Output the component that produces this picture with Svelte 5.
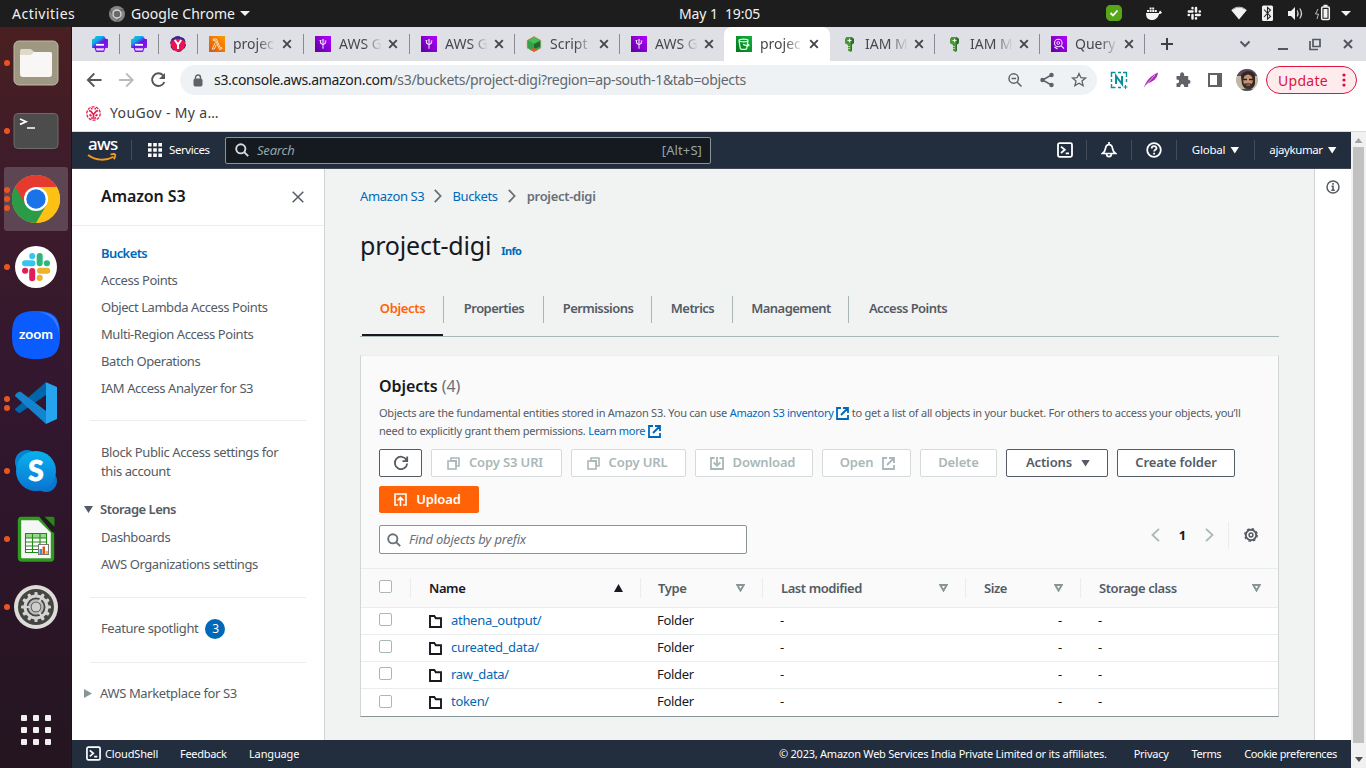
<script>
  const tabs = [
    { icon: 'lambda', label: 'projec', w: 106 },
    { icon: 'glue', label: 'AWS G', w: 106 },
    { icon: 'glue', label: 'AWS G', w: 105 },
    { icon: 'script', label: 'Script', w: 105 },
    { icon: 'glue', label: 'AWS G', w: 104 },
    { icon: 'bucket', label: 'projec', w: 106, active: true },
    { icon: 'key', label: 'IAM M', w: 105 },
    { icon: 'key', label: 'IAM M', w: 105 },
    { icon: 'query', label: 'Query', w: 105 }
  ];
  const dock = [
    { id: 'files', dots: 1 },
    { id: 'terminal', dots: 1 },
    { id: 'chrome', dots: 3, active: true },
    { id: 'slack', dots: 1 },
    { id: 'zoom', dots: 0 },
    { id: 'code', dots: 2 },
    { id: 'skype', dots: 1 },
    { id: 'calc', dots: 1 },
    { id: 'settings', dots: 1 }
  ];
  const navTop = ['Buckets', 'Access Points', 'Object Lambda Access Points', 'Multi-Region Access Points', 'Batch Operations', 'IAM Access Analyzer for S3'];
  const pageTabs = [
    { label: 'Objects', w: 84 },
    { label: 'Properties', w: 100 },
    { label: 'Permissions', w: 108 },
    { label: 'Metrics', w: 81 },
    { label: 'Management', w: 116 },
    { label: 'Access Points', w: 118 }
  ];
  const columns = ['Name', 'Type', 'Last modified', 'Size', 'Storage class'];
  const rows = ['athena_output/', 'cureated_data/', 'raw_data/', 'token/'];
  const gearTeeth = Array.from({ length: 12 }, (_, i) => i * 30);
</script>

{#snippet external()}
  <svg class="ext" width="13" height="13" viewBox="0 0 13 13" fill="none" stroke="currentColor" stroke-width="1.8">
    <path d="M5 1H1v11h11V8M7 1h5v5M12 1 5 8" />
  </svg>
{/snippet}

{#snippet shell(size)}
  <svg width={size} height={size} viewBox="0 0 16 16" fill="none" stroke="#fff" stroke-width="1.8">
    <rect x="1" y="1.2" width="14" height="13.6" rx="1.5" />
    <path d="m4 4.6 3.8 3.2L4 11M8.7 11.3H12" />
  </svg>
{/snippet}

{#snippet copyIcon()}
  <svg width="13" height="13" viewBox="0 0 13 13" fill="none" stroke="currentColor" stroke-width="1.6">
    <path d="M4 4V1h8v8H9" /><rect x="1" y="4" width="8" height="8" /><path d="M4 3.9h5.2V9" />
  </svg>
{/snippet}

{#snippet magnifier()}
  <svg width="14" height="14" viewBox="0 0 14 14" fill="none" stroke="currentColor" stroke-width="1.9">
    <circle cx="5.8" cy="5.8" r="4.6" /><path d="m9.2 9.2 4 4" />
  </svg>
{/snippet}

{#snippet favicon(name)}
  <svg class="fav" width="16" height="16" viewBox="0 0 16 16" fill="none">
    {#if name === 'lambda'}
      <rect width="16" height="16" fill="url(#gOrange)" />
      <path d="M4.300 3h3l4 8.800 1.300-.5.5 1.200-2.500 1-4-8.800H4.300zM6.400 6.500 3.200 13h2l2.200-4.300" stroke="#ffe9cf" stroke-width=".9" />
    {:else if name === 'glue'}
      <rect width="16" height="16" fill="url(#gPurple)" />
      <path d="M5.500 5v2L8 8.800v4M8 3.800v2.400M10.500 5.500V7L8 8.800" stroke="#f3defd" stroke-width="1.100" />
      <path d="M4.600 4.500h1.800M9.600 5h1.800M6.800 7h2.400M7.200 3.800h1.600" stroke="#f3defd" stroke-width="1.100" />
    {:else if name === 'script'}
      <path d="m8 .5 6.800 3.800v7.800L8 15.800l-6.800-3.700V4.300z" fill="#3fa94c" stroke="#e8894e" stroke-dasharray="1 1" />
      <path d="m1.600 5 6.400 3 6.400-3v6.500L8 15.200l-6.400-3.600z" fill="#37a04a" /><path d="m8 8 6-2.800v5.300L8 13z" fill="#23663a" />
      <path d="M4 13.800 8 12l4 1.800-4 2z" fill="#e9582d" /><path d="m2.800 4.500 5.200-3 5.200 3L8 7.400z" fill="#45c257" />
    {:else if name === 'bucket'}
      <rect width="16" height="16" fill="url(#gGreen)" />
      <path d="M3 4.500c0-1.800 9-1.800 9 0S3 6.300 3 4.500l1.300 8.200c1.300 1 5 1 6.400 0L12 4.500M7 8.400c6 2.600 7.500 1.100 4.500-.6" stroke="#e9ffe8" stroke-width="1.200" />
    {:else if name === 'key'}
      <path d="M5.300 1h5.400L13 3v4l-2 1.500v6L9.500 16 7 14.500V9L4 7.300V3z" fill="#4b963b" />
      <path d="M10.500 1 13 3v4l-2 1.500v6L9.800 16z" fill="#2c6b2c" />
      <path d="M6.500 4.500h4M8.500 2.800v3.500" stroke="#edf7e6" stroke-width="1.100" />
      <path d="M7 10.500h2M7 12.500h2" stroke="#a6d694" />
    {:else}
      <rect width="16" height="16" fill="url(#gPurple)" />
      <circle cx="7.300" cy="7" r="3.800" stroke="#f3defd" stroke-width="1.100" /><circle cx="7.300" cy="7" r="1.400" stroke="#f3defd" />
      <path d="m10 9.600 3 3M3.500 11l3 2" stroke="#f3defd" stroke-width="1.300" />
    {/if}
  </svg>
{/snippet}

{#snippet printer()}
  <svg class="fav" width="16" height="16" viewBox="0 0 16 16">
    <path d="M4 0h8l2 3h1c.7 0 1 .5 1 1v7c0 .7-.5 1-1 1h-1.500L12 16H4l-1.500-4H1c-.5 0-1-.3-1-1V4c0-.6.400-1 1-1h1z" fill="url(#gPrint)" />
    <path d="M4 8.800h8" stroke="#fff" stroke-width="1.800" /><path d="M4.600 14.500h6.800l.8-2.300H3.800z" fill="#efdcff" />
  </svg>
{/snippet}

{#snippet dockIcon(id)}
  <svg width="48" height="48" viewBox="0 0 48 48" fill="none">
    {#if id === 'files'}
      <rect x="2" y="2" width="44" height="44" rx="5" fill="#9e9782" stroke="#c0b9a5" />
      <path d="M8 12c0-1.500 1-2 2-2h8c2 0 3 3 5 3h15c2 0 2 1 2 2v4H8z" fill="#ded9cb" />
      <path d="M8 16h11l3-3h16c1.500 0 2 1 2 2v20c0 2-1 3-3 3H11c-2 0-3-1-3-3z" fill="#f8f7f5" />
    {:else if id === 'terminal'}
      <rect x="2" y="6.500" width="44" height="35" rx="4" fill="#4c4c4c" stroke="#6b6b69" />
      <path d="m8 12 6 2.700-6 2.700M15 21h8" stroke="#fff" stroke-width="1.700" />
    {:else if id === 'chrome'}
      <circle cx="24" cy="24" r="24" fill="#fbbc05" />
      <path d="M24 24 3.200 12A24 24 0 0 1 44.800 12z" fill="#e53b2f" />
      <path d="M24 12H44.800A24 24 0 0 1 24 48L34.400 30z" fill="#fcc113" />
      <path d="M3.200 12A24 24 0 0 0 24 48L34.400 30 24 24z" fill="#2c9b48" />
      <path d="M3.200 12 13.600 30 24 12z" fill="#e53b2f" />
      <path d="M3.200 12 13.600 30 20 34 9 35z" fill="#2c9b48" />
      <circle cx="24" cy="24" r="12" fill="#fff" /><circle cx="24" cy="24" r="9.700" fill="#1a73e8" />
    {:else if id === 'slack'}
      <circle cx="24" cy="24" r="21" fill="#fff" />
      <g stroke-width="6" stroke-linecap="round">
        <path d="M13 20.200h7.500M20.200 13v.2" stroke="#36c5f0" /><path d="M27.700 13v7.300M34.800 20.200h.2" stroke="#2eb67d" />
        <path d="M28 27.700h7.200M27.700 34.800v.2" stroke="#ecb22e" /><path d="M20.200 28v7.200M13 27.700h.2" stroke="#e01e5a" />
      </g>
    {:else if id === 'zoom'}
      <path d="M24 0c18 0 24 6 24 24s-6 24-24 24S0 42 0 24 6 0 24 0z" fill="#0b5cff" />
      <path d="M27 1c15 1 20 7 20 21C44 9 39 4 27 1z" fill="#3a7aff" />
      <text x="24" y="28" text-anchor="middle" textLength="34" lengthAdjust="spacingAndGlyphs" font-family="Lato" font-size="14" font-weight="700" fill="#fff">zoom</text>
    {:else if id === 'code'}
      <path d="M3 30 34 3v13L8 34c-1 .5-5-2.500-5-4z" fill="#0065a9" />
      <path d="M34 3.200 45 8v32l-11 5z" fill="#27a4ee" />
      <path d="M3 17 34 45V32L9 13c-2-1-6 2-6 4z" fill="#1683cf" />
    {:else if id === 'skype'}
      <circle cx="15" cy="15" r="12" fill="#0883d4" /><circle cx="34" cy="34" r="11" fill="#0a74cf" />
      <circle cx="24" cy="24" r="20" fill="url(#gSkype)" />
      <text x="24" y="34" text-anchor="middle" font-family="Lato" font-size="28" font-weight="900" fill="#fff" stroke="#fff" stroke-width=".8">S</text>
    {:else if id === 'calc'}
      <path d="M9 3.500h18L40.500 17v26c0 1.500-1 2-2 2H10c-2 0-2.500-1-2.500-2.500V5.500c0-1 .5-2 1.500-2z" fill="#f6f6f6" stroke="#2e9a20" stroke-width="3.400" />
      <path d="M27 1.500h5L42.500 12v6L40 17z" fill="#241a22" />
      <path d="M32.500 1.800h8c1.300 0 2 .7 2 2v8z" fill="#2c851b" />
      <path d="M13 18h22v20H13z" fill="#fff" /><path d="M13 18h22v5H13z" fill="#98d88a" />
      <path d="M13.500 18.500h21v19h-21zM13 23h22M13 27h22M13 31h22M13 34.500h22M20.500 18v20M28 18v20" stroke="#218a18" stroke-width="1.100" />
      <rect x="26.500" y="29.500" width="10" height="10" fill="#fff" stroke="#777" />
      <path d="M27.500 34h2.500v5h-2.500z" fill="#2a96e8" /><path d="M30.500 31.500h2.500V39h-2.500z" fill="#e0521b" /><path d="M33.500 36h2.500v3h-2.500z" fill="#f4b71c" />
    {:else}
      <circle cx="24" cy="24" r="22" fill="#dedcd9" /><circle cx="24" cy="24" r="18" fill="#454644" />
      {#each gearTeeth as a}
        <rect x="22.400" y="9" width="3.200" height="5" rx="1" fill="#d5d4d2" transform="rotate({a} 24 24)" />
      {/each}
      <circle cx="24" cy="24" r="11" stroke="#d5d4d2" stroke-width="3" />
      <circle cx="24" cy="24" r="6.500" stroke="#b9b9b7" stroke-width="2.500" /><circle cx="24" cy="24" r="4.500" fill="#cfcfcd" />
      <path d="M14 24h4M29.500 15 27 19M29.500 33 27 29" stroke="#d5d4d2" stroke-width="2.200" />
    {/if}
  </svg>
{/snippet}

<svg class="defs" width="0" height="0" aria-hidden="true">
  <defs>
    <linearGradient id="gOrange" x2="1" y1="1" y2="0"><stop stop-color="#d9560f" /><stop offset="1" stop-color="#ff9900" /></linearGradient>
    <linearGradient id="gPurple" x2="1" y1="1" y2="0"><stop stop-color="#5d00a0" /><stop offset="1" stop-color="#b400ff" /></linearGradient>
    <linearGradient id="gGreen" x2="1" y1="1" y2="0"><stop stop-color="#04761e" /><stop offset="1" stop-color="#0fb33c" /></linearGradient>
    <linearGradient id="gPrint" x2=".7" y2="1"><stop stop-color="#02d8e0" /><stop offset=".35" stop-color="#15a5ea" /><stop offset=".55" stop-color="#6a15e6" /><stop offset="1" stop-color="#9213e8" /></linearGradient>
    <linearGradient id="gSkype" x2="0" y2="1"><stop stop-color="#09b2ee" /><stop offset="1" stop-color="#0a74d1" /></linearGradient>
  </defs>
</svg>

<div class="desktop">
  <header class="topbar">
    <span class="activities">Activities</span>
    <svg width="16" height="16" viewBox="0 0 16 16" fill="none"><circle cx="8" cy="8" r="8" fill="#858585" /><path d="M8 4h7M4.600 10 1.300 4M11.500 10 8 16" stroke="#555" /><circle cx="8" cy="8" r="4" fill="#686868" stroke="#ddd" stroke-width="1.300" /></svg>
    <span class="app-name">Google Chrome</span>
    <i class="tri menu"></i>
    <span class="clock">May 1&nbsp; 19:05</span>
    <div class="tray">
      <svg width="260" height="27" viewBox="1100 0 260 27" fill="none">
        <path d="M1110 5h7c3 0 5 2 5 5v6c0 3-2 5-5 5h-6c-3 0-5-2-5-5v-7c0-2 2-4 4-4z" fill="#57a617" /><path d="m1110.500 13 2.500 2.500 4.500-5" stroke="#fff" stroke-width="1.800" />
        <path d="M1146 13h13c0-2 1-2 1.500-2.500.5 1 .5 1.500 1.500 1.500-.5 2-2 2-3 2-1 4-4 6-7 6-4 0-6-2-6-7zM1147 10h2v2h-2zM1149.600 10h2v2h-2zM1152.200 10h2v2h-2zM1154.800 10h2v2h-2zM1149.600 7.500h2v2h-2zM1152.200 7.500h2v2h-2z" fill="#f2f2f2" />
        <path d="M1188.800 11.500h3.700M1192.500 8v.3M1196 8v3.500M1199.700 11.500h.2M1196 15h3.700M1196 18.300v.3M1192.500 15v3.500M1188.700 15h.2" stroke="#f2f2f2" stroke-width="2.500" stroke-linecap="round" />
        <path d="M1231.500 10.500c4.500-4 10.500-4 15 0l-7.500 9z" fill="#f2f2f2" /><path d="M1231.500 10.200c4.500-4 10.500-4 15 0" stroke="#c2c2c2" />
        <rect x="1262" y="5.500" width="11" height="15.500" rx="1.500" fill="#f2f2f2" /><path d="m1264 9.500 6.500 7-3 2.500V7.500l3 2.500-6.500 7" stroke="#252525" stroke-width="1.100" />
        <path d="M1288 11h3l4-4v13l-4-4h-3z" fill="#f2f2f2" /><path d="M1297.300 10.500c1 2 1 4 0 6M1299.800 8.500c2 3 2 7 0 10" stroke="#cfcfcf" stroke-width="1.300" />
        <path d="m1318 9-2.500 5h3L1317 19" stroke="#bbb" /><rect x="1321.700" y="7" width="7.600" height="12.500" rx="1" stroke="#f2f2f2" stroke-width="1.500" /><path d="M1323.500 9h4v8.800h-4zM1323.500 4.700h4v2h-4z" fill="#f2f2f2" />
        <path d="M1341 11h10l-5 5z" fill="#f2f2f2" />
      </svg>
    </div>
  </header>

  <aside class="dock">
    {#each dock as d}
      <div class="slot">
        <div class="dots">{#each Array(d.dots) as _}<i></i>{/each}</div>
        <div class="tile" class:active={d.active}>{@render dockIcon(d.id)}</div>
      </div>
    {/each}
    <div class="apps">{#each Array(9) as _}<i></i>{/each}</div>
  </aside>

  <main class="browser">
    <div class="tabstrip">
      <div class="pin">{@render printer()}</div>
      <div class="pin">{@render printer()}</div>
      <div class="pin">
        <svg class="fav" width="16" height="16" viewBox="0 0 16 16" fill="none"><circle cx="8" cy="8" r="7.500" fill="#ee1250" stroke="#382c91" stroke-dasharray="5 3" /><path d="M2 4c2-3 10-3 12 0" stroke="#352b8d" stroke-width="2" /><path d="m4.800 4 3.200 4.500L11.200 4M8 8.500V13" stroke="#fff" stroke-width="2" /></svg>
      </div>
      {#each tabs as t, i}
        <div class="tab" class:active={t.active} class:nosep={i === 4} style:width="{t.w}px">
          {@render favicon(t.icon)}
          <span class="tab-label">{t.label}</span>
          <svg width="10" height="10" viewBox="0 0 10 10" stroke="#43474c" stroke-width="1.900"><path d="m1.200 1.200 7.600 7.600M8.800 1.200 1.200 8.800" /></svg>
        </div>
      {/each}
      <svg class="newtab" width="12" height="12" viewBox="0 0 12 12" stroke="#3c4043" stroke-width="2"><path d="M6 0v12M0 6h12" /></svg>
      <div class="window">
        <svg width="120" height="16" viewBox="0 0 120 16" fill="none" stroke="#54585e" stroke-width="2">
          <path d="m1.500 5.500 4.500 4.500 4.500-4.500" /><path d="M39 13h10" /><path d="M74 3.500h7v7h-7zM71 5v8.500h8" stroke-width="1.700" /><path d="m105 4 8 8M113 4l-8 8" />
        </svg>
      </div>
    </div>

    <div class="toolbar">
      <svg width="90" height="20" viewBox="0 0 90 20" fill="none" stroke-width="1.800">
        <path d="M16.500 10H3M9.300 3.500 2.800 10l6.500 6.500" stroke="#53575c" /><path d="M34 10h13.500M41.200 3.500l6.500 6.500-6.500 6.500" stroke="#b8babd" />
        <path d="M78 5.300A6.300 6.300 0 1 0 79.300 12" stroke="#53575c" stroke-width="2" /><path d="M80 3v6h-6z" fill="#53575c" />
      </svg>
      <div class="omnibox">
        <svg width="10" height="13" viewBox="0 0 10 13" fill="none"><rect x="1" y="5" width="8" height="7" rx="1" fill="#5f6368" stroke="#5f6368" /><path d="M2.500 5.500V3.500a2.500 2.500 0 0 1 5 0v2" stroke="#5f6368" stroke-width="1.400" /></svg>
        <span class="url"><b>s3.console.aws.amazon.com</b>/s3/buckets/project-digi?region=ap-south-1&amp;tab=objects</span>
        <svg width="80" height="18" viewBox="0 0 80 18" fill="none" stroke="#5f6368" stroke-width="1.500">
          <circle cx="6.700" cy="7.500" r="4.700" /><path d="m10 11 4.500 4.500M4.500 7.500h4.600" />
          <g transform="translate(-1.500)"><path d="m46 4-9 5 9 5" /><g fill="#5f6368"><circle cx="46" cy="4" r="1.500" /><circle cx="37" cy="9" r="1.500" /><circle cx="46" cy="14" r="1.500" /></g></g>
          <path d="m72 2.500 1.900 4.200 4.600.4-3.500 3 1.100 4.500L72 12.200l-4.100 2.400 1.100-4.500-3.500-3 4.600-.4z" stroke-width="1.300" />
        </svg>
      </div>
      <div class="extensions">
        <svg width="150" height="24" viewBox="1108 68 150 24" fill="none">
          <path d="M1111.500 77v-4.500h4M1118 72.500h3M1123 72.500h3.500V77M1126.500 79v3M1111.500 79v3M1111.500 84v3.500h4M1118 87.500h3" stroke="#0b8f9c" stroke-width="1.400" /><path d="M1116 84v-8l6 8v-8" stroke="#0b8f9c" stroke-width="2" /><path d="M1125.500 85v4M1123.500 87h4" stroke="#0b8f9c" />
          <path d="M1144 87.500c2-7 7-12 14-15-.5 6-5 9-9 10.500-2 .5-3 2-5 4.500z" fill="#a92bb8" /><path d="m1145 86 10-11" stroke="#e3a1eb" />
          <path d="M1176.500 76h3.700c-1-5 4.600-5 4 0h4v3.700c3-.5 3 4.500 0 4V87h-4c0-4-4-4-4 0h-3.700v-3.800c3.500.5 3.500-4.200 0-3.700z" fill="#5f6368" />
          <rect x="1209" y="74" width="12" height="12" stroke="#5f6368" stroke-width="2" /><path d="M1217 74h4v12h-4z" fill="#5f6368" />
          <clipPath id="face"><circle cx="1247" cy="80" r="11" /></clipPath>
          <g clip-path="url(#face)"><path d="M1236 69h22v23h-22z" fill="#c2b7a4" /><path d="M1236 69h22v7h-22z" fill="#5b4860" /><path d="M1241 77c0-7 14-8 14 0v7c-2 7-11 7-13 0z" fill="#332722" /><ellipse cx="1248" cy="80.500" rx="4.800" ry="6" fill="#c79476" /><path d="M1243 79.500h4M1249 79.500h4" stroke="#2b2020" stroke-width="1.500" /><path d="M1243.500 84c2-1 7-1 9 0l-1 4h-6z" fill="#443028" /><path d="M1246.500 85h3.500" stroke="#c08868" /><path d="M1238 92c2-4 15-5 18 0z" fill="#47515c" /></g>
        </svg>
        <button class="update">Update<svg width="4" height="14" viewBox="0 0 4 14" fill="#e00a34"><circle cx="2" cy="2" r="1.600" /><circle cx="2" cy="7" r="1.600" /><circle cx="2" cy="12" r="1.600" /></svg></button>
      </div>
    </div>

    <div class="bookmarks">
      <svg width="15" height="15" viewBox="0 0 15 15" fill="none" stroke="#e3194d"><circle cx="7.500" cy="7.500" r="6.700" stroke-dasharray="3 1.200" stroke-width="1.300" /><path d="m3 4.500 2 1 2.500 3 2.500-3 2-1M7.500 8.500V11M3.500 8.500 5.500 10M11.500 8.500l-2 1.500M5 2.800h1.500M8.500 2.800H10M5 12h5" stroke-width="1.600" /></svg>
      <span>YouGov - My a…</span>
    </div>

    <div class="page">
      <div class="viewport">
        <header class="aws">
          <div class="logo"><span>aws</span>
            <svg width="30" height="9" viewBox="0 0 30 9" fill="none" stroke="#f19a20" stroke-width="1.800"><path d="M1 2c8 5.800 18 6.200 25.500 1.800M23.500 1.500c3-.8 4.500-.3 4.700.3.300 1-.5 3-1.400 4.500" /></svg>
          </div>
          <i class="vr"></i>
          <svg width="14" height="14" viewBox="0 0 14 14" fill="#fff"><path d="M0 0h3.600v3.600H0zM5.200 0h3.600v3.600H5.200zM10.400 0H14v3.600h-3.600zM0 5.200h3.600v3.600H0zM5.200 5.200h3.600v3.600H5.200zM10.400 5.200H14v3.600h-3.600zM0 10.400h3.600V14H0zM5.200 10.400h3.600V14H5.200zM10.400 10.400H14V14h-3.600z" /></svg>
          <span class="services">Services</span>
          <div class="aws-search">{@render magnifier()}<em>Search</em><span>[Alt+S]</span></div>
          <div class="aws-right">
            <span class="cell c1">{@render shell(16)}</span>
            <span class="cell c2"><svg width="16" height="16" viewBox="0 0 16 16" fill="none" stroke="#fff" stroke-width="1.700"><path d="M8 0v2.500M1.500 11.500h13c-2.500-2-2.700-3-3-5C11.200 4 10 2.700 8 2.700S4.800 4 4.500 6.500c-.3 2-.5 3-3 5zM5.500 11.500c0 4.200 5 4.200 5 0" /></svg></span>
            <span class="cell c2"><svg width="16" height="16" viewBox="0 0 16 16" fill="none" stroke="#fff" stroke-width="1.800"><circle cx="8" cy="8" r="6.800" /><path d="M5.700 6.500c0-3 4.800-3 4.800-.3 0 1.600-2.400 1.600-2.400 3.300M8.100 10.800v1.700" /></svg></span>
            <span class="cell c3"><span>Global</span><i class="tri light"></i></span>
            <span class="cell c4"><span>ajaykumar</span><i class="tri light"></i></span>
          </div>
        </header>

        <div class="console">
          <nav class="side">
            <div class="side-head"><strong>Amazon S3</strong>
              <svg width="12" height="12" viewBox="0 0 12 12" stroke="#545b64" stroke-width="1.500"><path d="m.7.700 10.600 10.600M11.300.7.700 11.300" /></svg>
            </div>
            <ul class="first">{#each navTop as n, i}<li class:current={i === 0}>{n}</li>{/each}</ul>
            <hr />
            <p class="block">Block Public Access settings for<br />this account</p>
            <div class="group"><i class="tri"></i><strong>Storage Lens</strong></div>
            <ul><li>Dashboards</li><li>AWS Organizations settings</li></ul>
            <hr class="h2" />
            <div class="spot"><span>Feature spotlight</span><b>3</b></div>
            <hr class="h3" />
            <div class="market"><i></i>AWS Marketplace for S3</div>
          </nav>

          <section class="content">
            <div class="crumbs">
              <a>Amazon S3</a><svg width="8" height="14" viewBox="0 0 8 14" fill="none" stroke="#687078" stroke-width="1.800"><path d="m.8.800 5.800 6.200L.8 13.200" /></svg>
              <a>Buckets</a><svg width="8" height="14" viewBox="0 0 8 14" fill="none" stroke="#687078" stroke-width="1.800"><path d="m.8.800 5.800 6.200L.8 13.200" /></svg>
              <b>project-digi</b>
            </div>
            <div class="heading"><h1>project-digi</h1><a>Info</a></div>
            <div class="ptabs">
              {#each pageTabs as t, i}<div class="ptab" class:on={i === 0} style:width="{t.w}px"><span>{t.label}</span></div>{/each}
            </div>

            <div class="panel">
              <div class="panel-top">
                <h2>Objects <span>(4)</span></h2>
                <p>Objects are the fundamental entities stored in Amazon S3. You can use <a>Amazon S3 inventory {@render external()}</a> to get a list of all objects in your bucket. For others to access your objects, you’ll<br />need to explicitly grant them permissions. <a>Learn more {@render external()}</a></p>
                <div class="actions">
                  <button class="b-refresh"><svg width="16" height="16" viewBox="0 0 16 16" fill="none" stroke="#545b64" stroke-width="1.800"><path d="M13.500 5A6.200 6.200 0 1 0 14.200 8.500M14.200 1.500v4.700H9.500" /></svg></button>
                  <button class="off b-uri">{@render copyIcon()}<span>Copy S3 URI</span></button>
                  <button class="off b-url">{@render copyIcon()}<span>Copy URL</span></button>
                  <button class="off b-down"><svg width="14" height="13" viewBox="0 0 14 13" fill="none" stroke="currentColor" stroke-width="1.800"><path d="M4.500 1H1v11h12V1H9.500M7 0v8.500M3.700 5.500 7 8.700l3.300-3.200" /></svg><span>Download</span></button>
                  <button class="off b-open"><span>Open</span>{@render external()}</button>
                  <button class="off b-del"><span>Delete</span></button>
                  <button class="b-act"><span>Actions</span><i class="tri"></i></button>
                  <button class="b-new"><span>Create folder</span></button>
                  <button class="b-up"><svg width="13" height="13" viewBox="0 0 13 13" fill="none" stroke="currentColor" stroke-width="1.600"><path d="M4 12H1V1h11v11H9M6.500 13V4.500M3.500 7.500l3-3 3 3" /></svg><span>Upload</span></button>
                </div>
                <div class="filter">
                  <div class="find">{@render magnifier()}<em>Find objects by prefix</em></div>
                  <div class="pager">
                    <svg width="9" height="14" viewBox="0 0 9 14" fill="none" stroke="#aab7b8" stroke-width="1.800"><path d="M8 .8 1.500 7 8 13.200" /></svg>
                    <b>1</b>
                    <svg width="9" height="14" viewBox="0 0 9 14" fill="none" stroke="#aab7b8" stroke-width="1.800"><path d="M1 .8 7.500 7 1 13.200" /></svg>
                    <i class="bar"></i>
                    <svg width="14" height="14" viewBox="0 0 14 14" fill="none" stroke="#545b64"><circle cx="7" cy="7" r="5.200" stroke-width="1.900" /><circle cx="7" cy="7" r="6.300" stroke-width="1.300" stroke-dasharray="2.480 2.480" /><circle cx="7" cy="7" r="1.900" stroke-width="1.500" /></svg>
                  </div>
                </div>
              </div>
              <div class="row head">
                <div class="check"><i></i></div>
                {#each columns as c, i}
                  <div class="col" class:sorted={i === 0} class:type={i === 1}><b>{c}</b>
                    {#if i === 0}<svg width="9" height="8" viewBox="0 0 9 8"><path d="M4.500 0 9 8H0z" fill="#16191f" /></svg>
                    {:else}<svg width="9" height="8" viewBox="0 0 9 8"><path d="M1.200 1h6.600L4.500 6.600z" fill="none" stroke="#879596" stroke-width="1.900" /></svg>{/if}
                  </div>
                {/each}
              </div>
              {#each rows as r}
                <div class="row">
                  <div class="check"><i></i></div>
                  <div class="name"><svg width="13" height="13" viewBox="0 0 13 13" fill="none" stroke="#16191f" stroke-width="1.900"><path d="M1 1h4.300l1.500 2.200H12V12H1z" /></svg><a>{r}</a></div>
                  <div class="kind">Folder</div><div>-</div><div class="size">-</div><div>-</div>
                </div>
              {/each}
            </div>
          </section>

          <aside class="info"><svg width="14" height="14" viewBox="0 0 14 14" fill="none" stroke="#545b64" stroke-width="1.500"><circle cx="7" cy="7" r="6" /><path d="M5.500 6.300H7V10M5.300 10.200h3.500M6.200 3.900h1.600" stroke-width="1.600" /></svg></aside>
        </div>

        <footer class="foot">
          {@render shell(15)}<span class="cs">CloudShell</span><span class="fb">Feedback</span><span>Language</span>
          <span class="copy">© 2023, Amazon Web Services India Private Limited or its affiliates.</span><span class="pr">Privacy</span><span class="te">Terms</span><span class="ck">Cookie preferences</span>
        </footer>
      </div>
      <div class="scroll"><i class="up"></i><div></div><i class="down"></i></div>
    </div>
  </main>
</div>

<style>
  :global(body) { margin: 0; overflow: hidden; }
  * { box-sizing: border-box; }
  .defs { position: absolute; }
  svg { display: block; flex: none; }
  ul, p, h1, h2 { margin: 0; padding: 0; list-style: none; }
  button { font: inherit; margin: 0; padding: 0; }
  .desktop { width: 1366px; height: 768px; display: grid; grid-template: 27px 741px / 72px 1294px; font-family: "Noto Sans", "Open Sans", sans-serif; font-size: 13px; white-space: nowrap; overflow: hidden; }

  .tri { display: block; width: 9px; height: 7px; clip-path: polygon(0 0, 100% 0, 50% 100%); background: #545b64; flex: none; }
  .tri.light { background: #fff; }
  .tri.menu { background: #f2f2f2; width: 10px; height: 5px; }

  .topbar { grid-column: 1 / 3; background: #1d1d1d; color: #f2f2f2; display: flex; align-items: center; padding-left: 12px; font-size: 14px; }
  .activities { width: 97px; letter-spacing: .5px; }
  .app-name { margin: 0 5px 0 6px; width: 104px; letter-spacing: .05px; }
  .clock { margin-left: 429px; width: 82px; letter-spacing: -.1px; padding-bottom: 1px; }
  .tray { margin-left: auto; padding-right: 6px; }

  .dock { background: linear-gradient(#491f21, #3f1c2a 18%, #32172f 50%, #2d1529 70%, #241520); padding-top: 4px; border-right: 1px solid #20101d; }
  .slot { height: 64px; margin-bottom: 4px; display: flex; align-items: center; }
  .dots { width: 7px; margin-left: 4px; margin-right: -7px; display: flex; flex-direction: column; gap: 3px; z-index: 1; }
  .dots i { height: 6px; width: 6px; border-radius: 50%; background: #e95420; }
  .tile { width: 64px; height: 64px; display: grid; place-items: center; border-radius: 3px; }
  .tile.active { background: #5e4553; }
  .apps { display: grid; grid-template-columns: repeat(3, 6px); gap: 6px; margin: 76px 0 0 21px; }
  .apps i { width: 6px; height: 6px; border-radius: 1px; background: #f1f0ee; }

  .browser { background: #fff; display: flex; flex-direction: column; }
  .tabstrip { height: 34px; background: #dee0e5; display: flex; align-items: center; padding-left: 9px; color: #45484d; }
  .pin { width: 39px; height: 20px; display: flex; align-items: center; justify-content: center; border-right: 1px solid #888b91; }
  .tab { height: 20px; padding-left: 11px; border-right: 1px solid #888b91; display: flex; align-items: center; font-size: 14px; }
  .tab-label { width: 43px; margin: 0 6px 0 8px; padding-bottom: 1px; -webkit-mask: linear-gradient(90deg, #000 25px, transparent 43px); mask: linear-gradient(90deg, #000 25px, transparent 43px); }
  .tab.nosep { border-color: transparent; }
  .tab.active { height: 34px; padding-left: 12px; background: #fff; border: 0; border-radius: 8px 8px 0 0; }
  .newtab { margin-left: 16px; }
  .window { margin-left: 66px; }

  .toolbar { height: 38px; display: flex; align-items: center; padding-left: 13px; }
  .omnibox { width: 917px; height: 30px; margin-left: 5px; border-radius: 15px; background: #eff2f4; display: flex; align-items: center; padding: 0 10px 0 13px; }
  .url { color: #63676c; font-size: 14px; letter-spacing: -.325px; margin-left: 11px; flex: 1; padding-bottom: 2px; }
  .url b { font-weight: 400; color: #202124; }
  .extensions { display: flex; align-items: center; margin-left: 11px; }
  .update { width: 91px; height: 28px; margin-left: 8px; border: 1px solid #dc143c; border-radius: 14px; background: #fdebee; color: #dc143c; font-size: 14px; letter-spacing: .3px; display: flex; align-items: center; justify-content: space-between; padding: 0 10px 0 11px; }
  .bookmarks { height: 32px; display: flex; align-items: center; gap: 9px; padding-left: 14px; color: #3c4043; font-size: 14px; letter-spacing: .35px; padding-bottom: 4px; }
  .bookmarks span { padding-bottom: 2px; }
  .page { flex: none; height: 637px; display: flex; border-top: 1px solid #d5dbdb; }
  .viewport { width: 1279px; display: flex; flex-direction: column; }

  .aws { height: 37px; background: #222d3e; border-bottom: 1px solid #414750; display: flex; align-items: center; color: #fff; font-size: 11.5px; letter-spacing: -.4px; padding-left: 15px; }
  .logo { width: 30px; height: 24px; letter-spacing: -.7px; }
  .logo span { display: block; height: 15px; font-size: 17px; line-height: 12px; padding-left: 1px; font-weight: 500; }
  .vr { width: 1px; height: 20px; background: #414d5c; margin: 0 16px 0 14px; }
  .services { width: 56px; padding: 0 0 1px 7px; }
  .aws-search { width: 486px; height: 27px; margin-left: 7px; border: 1px solid #879596; border-radius: 2px; background: #151920; color: #95a5a6; display: flex; align-items: center; padding: 0 8px 0 9px; font-size: 13px; letter-spacing: -.2px; }
  .aws-search svg { color: #d5dbdb; }
  .aws-search em { margin-left: 8px; flex: 1; }
  .aws-search span { letter-spacing: .1px; }
  .aws-right { margin-left: auto; display: flex; align-items: center; }
  .cell { height: 20px; display: flex; align-items: center; justify-content: center; }
  .cell span { padding-bottom: 1px; }
  .cell + .cell { border-left: 1px solid #414d5c; }
  .c1 { width: 43px; } .c2 { width: 45px; }
  .c3 { width: 78px; gap: 5px; letter-spacing: -.2px; } .c4 { width: 97px; gap: 5px; }

  .console { height: 571px; display: flex; background: #f1f3f3; color: #545b64; }
  .side { width: 253px; background: #fff; border-right: 1px solid #d0d4d4; letter-spacing: -.43px; }
  .side-head { height: 57px; border-bottom: 1px solid #eaeded; padding: 0 20px 1px 29px; display: flex; align-items: center; justify-content: space-between; }
  .side-head strong { font-size: 16px; color: #16191f; letter-spacing: -.1px; font-weight: 600; padding-bottom: 1px; }
  li { height: 27px; line-height: 27px; padding-left: 29px; }
  .first { padding-top: 14px; }
  .current { font-weight: 600; color: #0068b8; letter-spacing: -.6px; }
  hr { border: 0; border-top: 1px solid #eaeded; margin: 18px 18px 0; }
  .block { padding: 22px 0 0 29px; line-height: 19px; letter-spacing: -.4px; }
  .group { height: 27px; margin-top: 14px; display: flex; align-items: center; gap: 7px; padding-left: 12px; margin-bottom: 2px; }
  .group .tri { margin-top: 2px; }
  .group strong { font-weight: 600; letter-spacing: -.5px; }
  .h2 { margin-top: 19px; }
  .spot { height: 26px; margin-top: 18px; padding-left: 29px; display: flex; align-items: center; }
  .spot span { padding-bottom: 2px; letter-spacing: -.4px; }
  .spot b { width: 20px; height: 20px; border-radius: 50%; background: #0068b8; color: #fff; font-weight: 400; font-size: 12px; line-height: 19px; text-align: center; margin-left: 7px; }
  .h3 { margin-top: 20px; }
  .market { height: 26px; margin-top: 17px; display: flex; align-items: center; gap: 8px; padding-left: 12px; letter-spacing: -.37px; }
  .market i { width: 8px; height: 9px; background: #879596; clip-path: polygon(0 0, 100% 50%, 0 100%); margin-top: 1px; }

  a { color: #0068b8; }
  .content { width: 989px; padding: 18px 34px 0 35px; }
  .crumbs { height: 20px; display: flex; align-items: center; letter-spacing: -.37px; gap: 10px; margin-top: -1px; }
  .crumbs b { color: #687078; font-weight: 600; letter-spacing: -.3px; margin-left: 1px; }
  .heading { display: flex; align-items: baseline; height: 36px; margin-top: 22px; }
  h1 { font-size: 25px; line-height: 34px; font-weight: 400; color: #16191f; letter-spacing: -.2px; margin-right: 10px; }
  .heading a { font-weight: 700; font-size: 11px; letter-spacing: -.6px; }
  .ptabs { height: 59px; margin: 14px 1px 0 0; padding-top: 18px; border-bottom: 1px solid #aab7b8; display: flex; font-weight: 600; letter-spacing: -.55px; }
  .ptab { height: 27px; line-height: 25px; border-right: 1px solid #aab7b8; text-align: center; padding-left: 1px; }
  .ptab:last-child { border: 0; padding: 0; }
  .ptab.on { color: #ff6207; padding-left: 2px; height: 41px; border-right: 0; }
  .ptab.on span { display: block; height: 27px; border-right: 1px solid #aab7b8; letter-spacing: -.35px; }
  .ptab.on::after { content: ""; display: block; height: 2px; margin-top: 11px; background: #16191f; margin-right: 1px; }

  .panel { width: 919px; margin-top: 18px; border: 1px solid #d0d5d5; border-top-color: #eaeded; border-bottom-color: #879596; background: #fafafa; }
  .panel-top { height: 212px; padding: 17px 18px 0; }
  h2 { font-size: 16px; line-height: 26px; font-weight: 600; color: #16191f; letter-spacing: -.05px; }
  h2 span { font-weight: 400; color: #687078; }
  .panel p { font-size: 11px; line-height: 18px; letter-spacing: -.24px; padding-top: 5px; height: 50px; }
  .panel p a { letter-spacing: -.28px; }
  .panel p svg { display: inline-block; vertical-align: -3px; }
  .actions { display: flex; flex-wrap: wrap; gap: 9px; font-weight: 600; padding-right: 20px; }
  .actions button { height: 28px; display: flex; align-items: center; justify-content: center; gap: 9px; border: 1px solid #545b64; border-radius: 2px; background: #fff; color: #545b64; letter-spacing: -.13px; }
  .actions button span { padding-bottom: 2px; }
  .actions button.off { color: #aab7b8; border-color: #d5dbdb; }
  .b-refresh { width: 43px; } .b-uri { width: 131px; } .b-url { width: 115px; } .b-down { width: 118px; }
  .actions .b-uri, .actions .b-url, .actions .b-down, .actions .b-up { padding-right: 3px; }
  .b-open { width: 89px; } .b-del { width: 77px; } .b-act { width: 102px; } .b-new { width: 118px; }
  .actions .b-open, .actions .b-act { padding-left: 2px; }
  .actions .b-up { width: 100px; height: 27px; background: #ff6207; border-color: #ff6207; color: #fff; }
  .filter { display: flex; justify-content: space-between; margin-top: 12px; }
  .find { width: 368px; height: 29px; border: 1px solid #879596; border-radius: 2px; background: #fff; display: flex; align-items: center; padding-left: 7px; color: #687078; gap: 8px; letter-spacing: -.2px; }
  .find em { padding-bottom: 2px; }
  .pager { height: 20px; display: flex; align-items: center; color: #16191f; padding-right: 2px; }
  .pager b { width: 45px; text-align: center; padding-bottom: 1px; }
  .bar { width: 1px; height: 27px; background: #eaeded; margin: 0 15px 0 14px; }
  .row { height: 27px; display: grid; grid-template-columns: 50px 230px 122px 203px 115px 197px; align-items: center; background: #fff; color: #16191f; border-top: 1px solid #eaeded; letter-spacing: -.3px; }
  .row > div { padding: 0 0 2px 17px; }
  .row > .check { padding-left: 18px; padding-bottom: 3px; }
  .row > .size { text-align: right; padding-right: 19px; }
  .row > .kind { padding-left: 16px; }
  .head { height: 39px; background: #fafafa; color: #545b64; }
  .check i { display: block; width: 13px; height: 13px; border: 1px solid #aab7b8; border-radius: 2px; background: #fff; }
  .row > .col { height: 20px; display: flex; align-items: center; justify-content: space-between; padding: 0 18px 0 18px; border-left: 1px solid #eaeded; margin-left: -1px; }
  .row > .col:last-child { padding-right: 17px; }
  .row > .type { padding-left: 17px; }
  .col b { font-weight: 600; letter-spacing: -.42px; padding-bottom: 1px; }
  .sorted { color: #16191f; }
  .name { display: flex; align-items: center; gap: 9px; }
  .name svg { margin-top: 3px; }
  .row > .name { padding-left: 18px; }
  .row:last-child { height: 28px; }
  .row:last-child > div { padding-bottom: 3px; }

  .info { width: 37px; background: #fff; border-left: 1px solid #d0d4d4; padding: 11px 0 0 11px; }
  .foot { height: 28px; background: #222d3e; color: #fff; font-size: 11px; letter-spacing: -.15px; display: flex; align-items: center; padding: 0 14px 1px; }
  .cs { width: 75px; margin-left: 4px; } .fb { width: 69px; letter-spacing: -.3px; }
  .copy { margin-left: auto; letter-spacing: -.24px; }
  .pr { margin-left: 27px; letter-spacing: -.25px; } .te { margin-left: 23px; letter-spacing: -.4px; } .ck { margin-left: 23px; letter-spacing: -.37px; }
  .scroll { width: 15px; background: #f1f1f1; display: flex; flex-direction: column; align-items: center; padding: 6px 0; }
  .scroll div { width: 11px; height: 596px; background: #c1c1c1; margin: 4px 0 auto; }
  .up, .down { width: 8px; height: 5px; background: #a3a3a3; clip-path: polygon(50% 0, 100% 100%, 0 100%); }
  .down { background: #505050; transform: rotate(180deg); }
</style>
